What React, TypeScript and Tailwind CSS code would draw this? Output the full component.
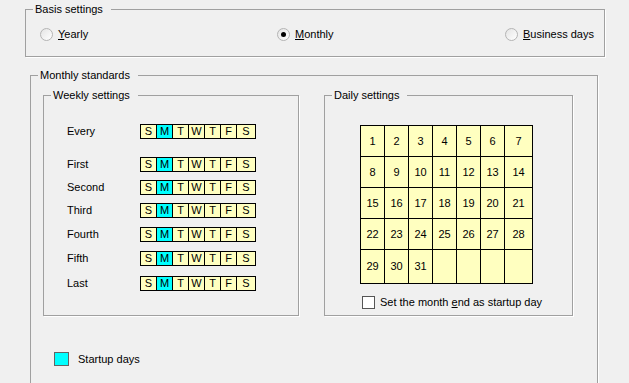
import type { ReactNode } from "react";

const DAYS = ["S", "M", "T", "W", "T", "F", "S"];

const WEEK_ROWS = [
  { label: "Every", mt: "mt-[22px]" },
  { label: "First", mt: "mt-[18px]" },
  { label: "Second", mt: "mt-[8px]" },
  { label: "Third", mt: "mt-[8px]" },
  { label: "Fourth", mt: "mt-[9px]" },
  { label: "Fifth", mt: "mt-[9px]" },
  { label: "Last", mt: "mt-[10px]" },
];

function GroupBox({
  title,
  className,
  children,
}: {
  title: string;
  className: string;
  children: ReactNode;
}) {
  return (
    <fieldset
      className={`border border-[#a0a0a0] shadow-[1px_1px_0_#ffffff] ${className}`}
    >
      <legend className="ml-[7px] pl-[2px] pr-[8px] leading-[13px]">
        {title}
      </legend>
      {children}
    </fieldset>
  );
}

function Radio({ checked, children }: { checked?: boolean; children: ReactNode }) {
  return (
    <div className="flex items-center gap-[5px]">
      <div className="flex h-[13px] w-[13px] items-center justify-center rounded-full border border-[#b4b4b4] bg-gradient-to-br from-[#e4e4e4] to-white">
        {checked && <div className="h-[5px] w-[5px] rounded-full bg-black" />}
      </div>
      <span>{children}</span>
    </div>
  );
}

function DayStrip() {
  return (
    <div className="flex h-[15px] w-[116px] border border-black">
      {DAYS.map((d, i) => (
        <div
          key={i}
          className={`flex items-center justify-center leading-none ${
            i < 6 ? "w-[16px] border-r border-black" : "flex-1"
          } ${i === 1 ? "bg-[#00ffff]" : "bg-[#ffffc0]"}`}
        >
          {d}
        </div>
      ))}
    </div>
  );
}

function DayGrid() {
  const cells = Array.from({ length: 35 }, (_, i) => (i < 31 ? String(i + 1) : ""));
  return (
    <div className="grid w-[173px] grid-cols-[repeat(6,24px)_28px] grid-rows-[repeat(4,31px)_34px] border-l border-t border-black bg-[#ffffc0]">
      {cells.map((c, i) => (
        <div
          key={i}
          className="flex items-center justify-center border-b border-r border-black"
        >
          {c}
        </div>
      ))}
    </div>
  );
}

export default function App() {
  return (
    <div className="h-[383px] w-[629px] overflow-hidden bg-[#f0f0f0] font-['Liberation_Sans',Arial,sans-serif] text-[11px] leading-[13px] text-black">
      <GroupBox title="Basis settings" className="ml-[25px] mt-[3px] h-[54px] w-[580px]">
        <div className="mt-[12px] grid grid-cols-[237px_228px_auto] pl-[14px]">
          <Radio>
            <span className="underline">Y</span>early
          </Radio>
          <Radio checked>
            <span className="underline">M</span>onthly
          </Radio>
          <Radio>
            <span className="underline">B</span>usiness days
          </Radio>
        </div>
      </GroupBox>

      <GroupBox title="Monthly standards" className="ml-[30px] mt-[12px] h-[340px] w-[568px]">
        <div className="mt-[7px] flex">
          <GroupBox title="Weekly settings" className="ml-[12px] h-[227px] w-[256px]">
            {WEEK_ROWS.map((r) => (
              <div key={r.label} className={`flex h-[15px] items-center ${r.mt}`}>
                <span className="w-[96px] pl-[23px]">{r.label}</span>
                <DayStrip />
              </div>
            ))}
          </GroupBox>

          <GroupBox title="Daily settings" className="ml-[25px] h-[227px] w-[249px]">
            <div className="ml-[35px] mt-[23px]">
              <DayGrid />
            </div>
            <div className="ml-[37px] mt-[12px] flex items-center gap-[5px]">
              <div className="h-[13px] w-[13px] border border-[#555555] bg-white" />
              <span>
                Set the month <span className="underline">e</span>nd as startup day
              </span>
            </div>
          </GroupBox>
        </div>

        <div className="ml-[23px] mt-[36px] flex items-center gap-[9px]">
          <div className="h-[14px] w-[15px] border border-[#646464] bg-[#00ffff]" />
          <span>Startup days</span>
        </div>
      </GroupBox>
    </div>
  );
}
